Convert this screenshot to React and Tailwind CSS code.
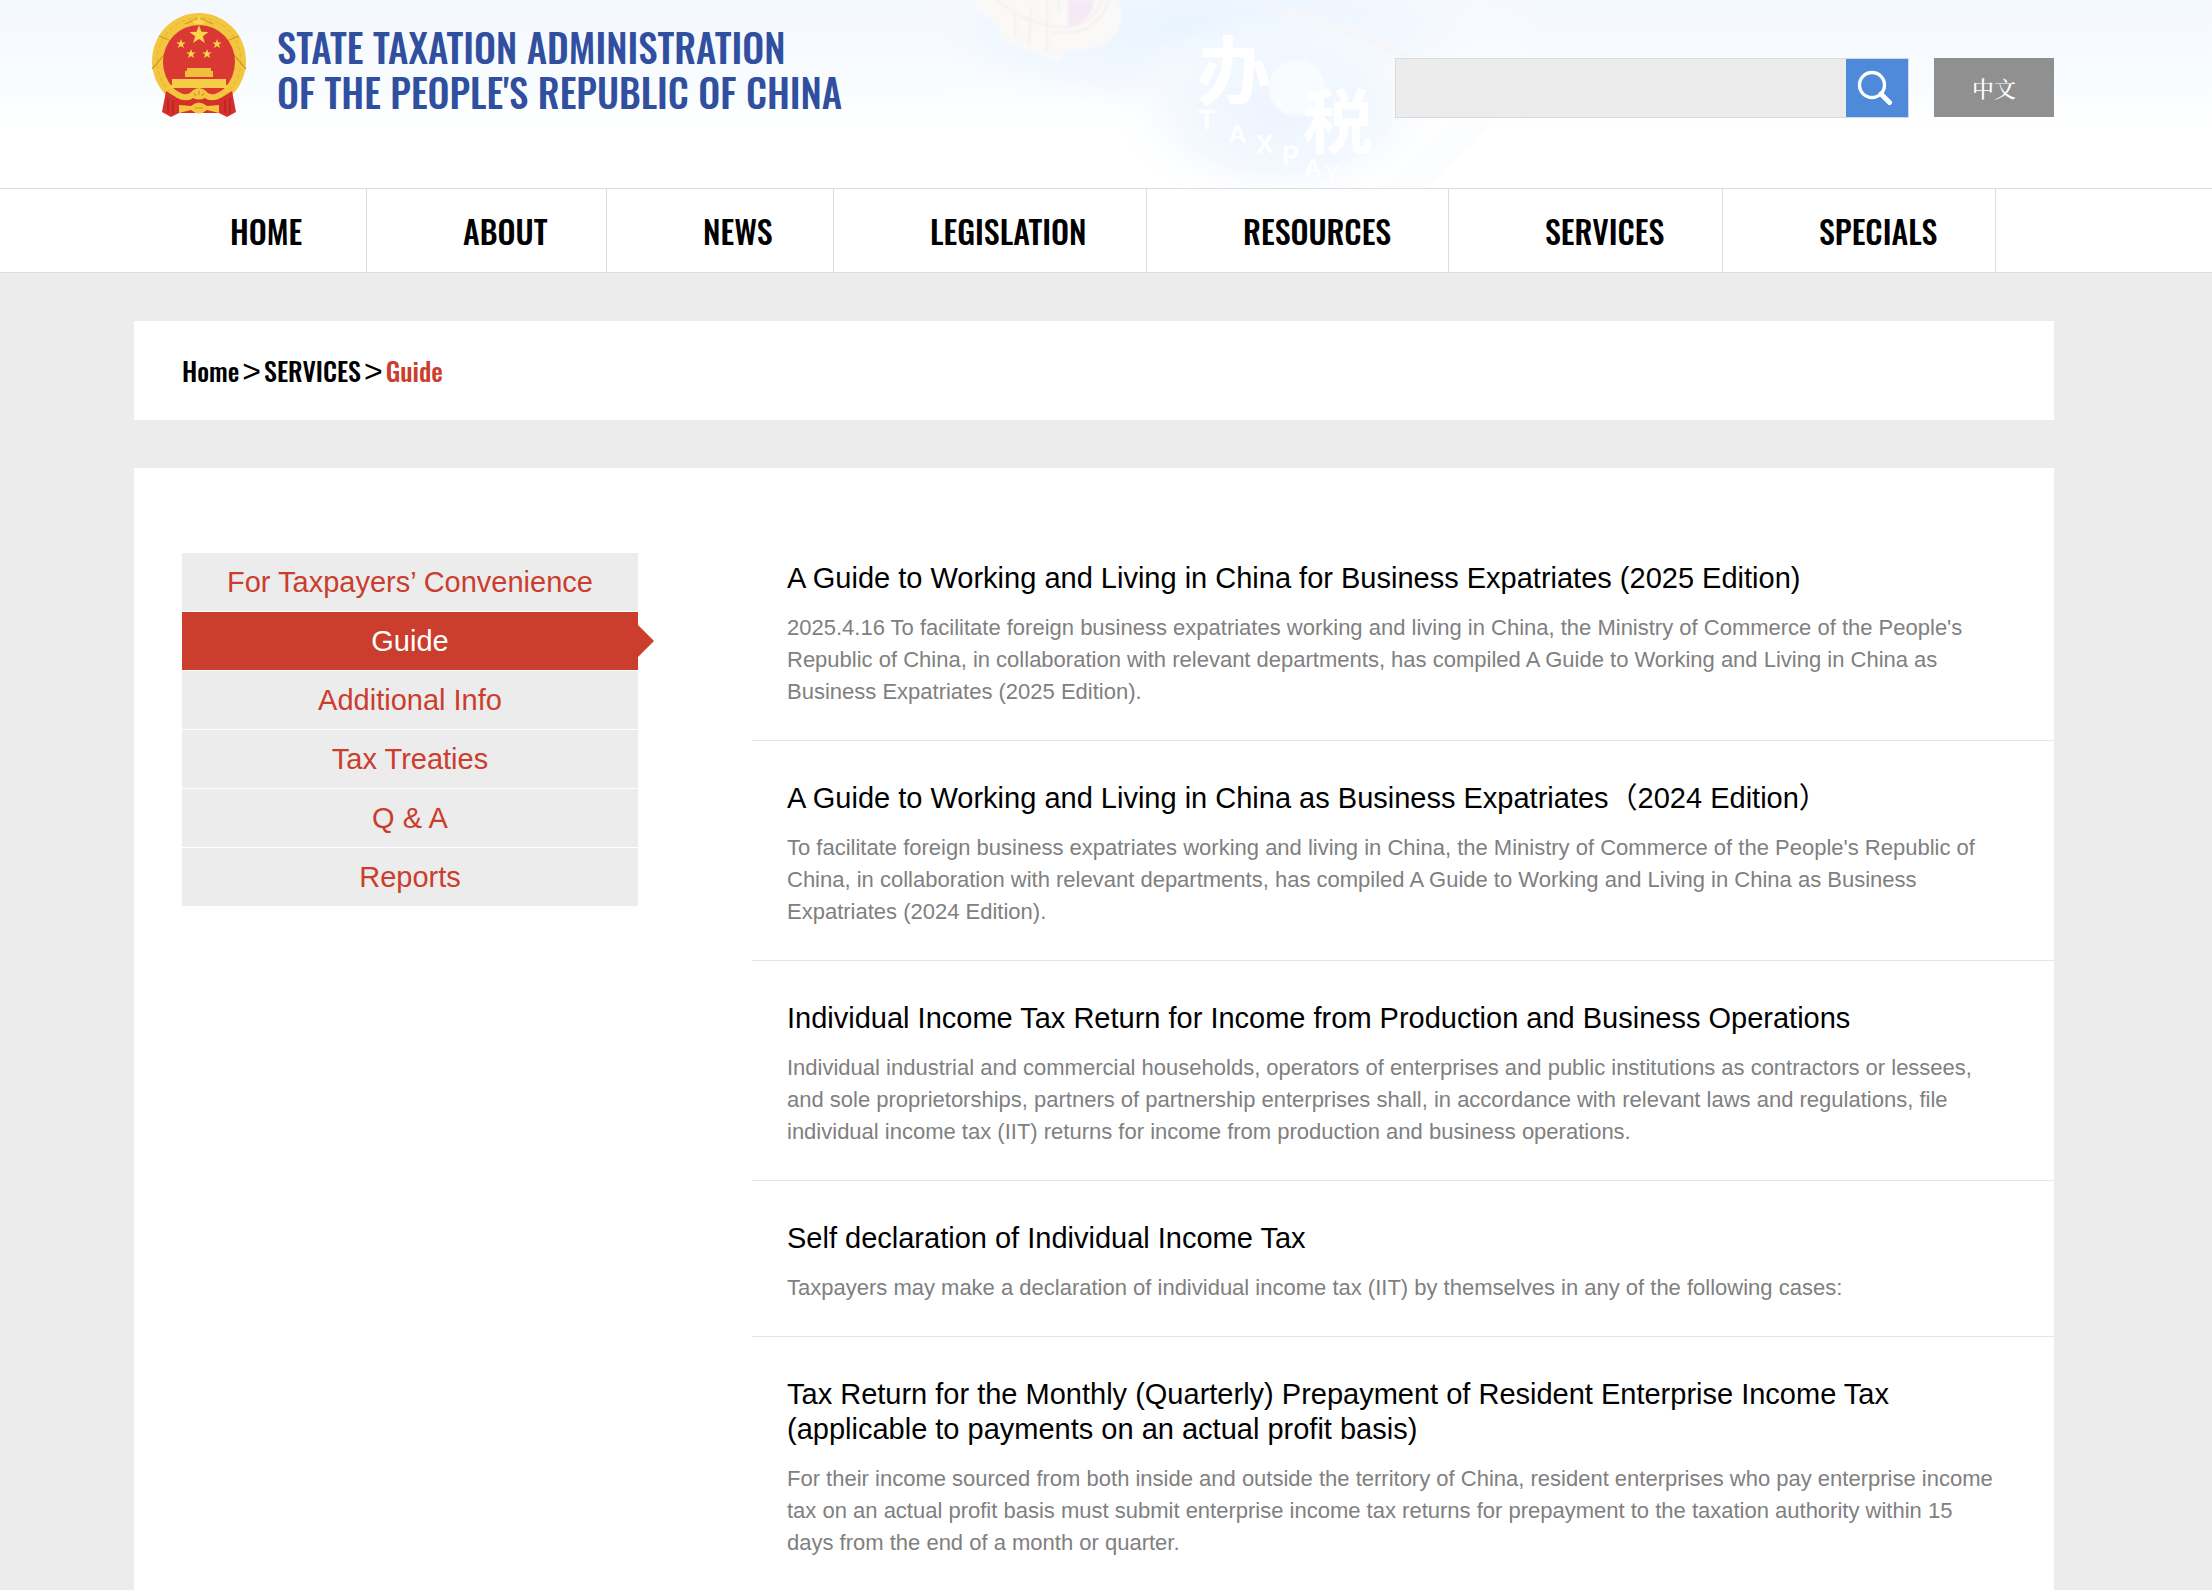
import React, { useState } from "react";

const navItems = [
  { name: "HOME", width: "w-[233px]" },
  { name: "ABOUT", width: "w-[240px]" },
  { name: "NEWS", width: "w-[227px]" },
  { name: "LEGISLATION", width: "w-[313px]" },
  { name: "RESOURCES", width: "w-[302px]" },
  { name: "SERVICES", width: "w-[274px]" },
  { name: "SPECIALS", width: "w-[273px]" },
];

const sideItems = [
  "For Taxpayers’ Convenience",
  "Guide",
  "Additional Info",
  "Tax Treaties",
  "Q & A",
  "Reports",
];

const articles = [
  {
    title: "A Guide to Working and Living in China for Business Expatriates (2025 Edition)",
    text: "2025.4.16 To facilitate foreign business expatriates working and living in China, the Ministry of Commerce of the People's Republic of China, in collaboration with relevant departments, has compiled A Guide to Working and Living in China as Business Expatriates (2025 Edition).",
  },
  {
    title: "A Guide to Working and Living in China as Business Expatriates（2024 Edition）",
    text: "To facilitate foreign business expatriates working and living in China, the Ministry of Commerce of the People's Republic of China, in collaboration with relevant departments, has compiled A Guide to Working and Living in China as Business Expatriates (2024 Edition).",
  },
  {
    title: "Individual Income Tax Return for Income from Production and Business Operations",
    text: "Individual industrial and commercial households, operators of enterprises and public institutions as contractors or lessees, and sole proprietorships, partners of partnership enterprises shall, in accordance with relevant laws and regulations, file individual income tax (IIT) returns for income from production and business operations.",
  },
  {
    title: "Self declaration of Individual Income Tax",
    text: "Taxpayers may make a declaration of individual income tax (IIT) by themselves in any of the following cases:",
  },
  {
    title: "Tax Return for the Monthly (Quarterly) Prepayment of Resident Enterprise Income Tax (applicable to payments on an actual profit basis)",
    text: "For their income sourced from both inside and outside the territory of China, resident enterprises who pay enterprise income tax on an actual profit basis must submit enterprise income tax returns for prepayment to the taxation authority within 15 days from the end of a month or quarter.",
  },
];

const STAR = "0,-10 2.4,-3.2 9.5,-3.1 3.8,1.2 5.9,8.1 0,4 -5.9,8.1 -3.8,1.2 -9.5,-3.1 -2.4,-3.2";

const Emblem = () => (
  <svg viewBox="0 0 96 106" className="w-24 h-[106px] shrink-0" aria-hidden="true">
    {/* Wheat ring */}
    <ellipse cx="48" cy="49" rx="47" ry="48" fill="#f3c63f" />
    <ellipse cx="48" cy="49" rx="42" ry="43" fill="none" stroke="#e3b034" strokeWidth="1" strokeDasharray="4 3" />
    <path d="M1 57 L14 42 M95 57 L82 42 M8 24 L18 28 M88 24 L78 28 M34 12 L48 6 L62 12" stroke="#cf9a28" strokeWidth="1.2" fill="none" />
    <path d="M48 3 L50 8 L55 9 L51 12 H45 L41 9 L46 8 Z" fill="#ffd84f" />
    <ellipse cx="48" cy="50" rx="36" ry="37" fill="#da3832" />
    {/* Stars */}
    <polygon points={STAR} fill="#fbd64a" transform="translate(48 23)" />
    <polygon points={STAR} fill="#fbd64a" transform="translate(30 32) scale(0.5)" />
    <polygon points={STAR} fill="#fbd64a" transform="translate(66 32) scale(0.5)" />
    <polygon points={STAR} fill="#fbd64a" transform="translate(40 42) scale(0.5)" />
    <polygon points={STAR} fill="#fbd64a" transform="translate(56 42) scale(0.5)" />
    {/* Gate */}
    <path d="M36 56 H60 V59 H62 V65 H34 V59 H36 Z" fill="#efbf3c" />
    <path d="M21 67 H75 V73 H77 V76 H19 V73 H21 Z" fill="#f6cd45" />
    {/* Ribbons */}
    <path d="M15 79 L26 86 H70 L81 79 L85 100 L76 105 L68 101 H28 L20 105 L11 100 Z" fill="#d5302b" />
    <path d="M18 75 L32 82 Q38 83 41 79 Q48 73 55 79 Q58 83 64 82 L78 75 L68 87 Q58 90 54 86 Q48 89 42 86 Q38 90 28 87 Z" fill="#f3c63f" />
    <path d="M28 93 L40 94 Q48 87 56 94 L68 93 V101 L56 98 Q48 105 40 98 L28 101 Z" fill="#f3c63f" />
    <path d="M17 86 V101 M22 88 V101 M74 88 V101 M79 86 V101" stroke="#b02423" strokeWidth="1.3" />
    <path d="M43 81 L45 84 M48 79 V83 M53 81 L51 84 M44 96 H52" stroke="#cf9526" strokeWidth="1.2" />
  </svg>
);

// Pale photo of a tax service hall sign behind the header
const HeaderBackdrop = () => (
  <svg
    viewBox="0 0 700 188"
    className="absolute top-0 left-[937px] w-[700px] h-[188px] pointer-events-none"
    aria-hidden="true"
  >
    <defs>
      <radialGradient id="sky" cx="0.37" cy="0.15" r="0.5">
        <stop offset="0" stopColor="#e9f4ff" />
        <stop offset="0.6" stopColor="#f1f7ff" stopOpacity="0.8" />
        <stop offset="1" stopColor="#ffffff" stopOpacity="0" />
      </radialGradient>
      <radialGradient id="wall" cx="0.5" cy="0.5" r="0.5">
        <stop offset="0" stopColor="#edf4ff" />
        <stop offset="0.6" stopColor="#f3f8ff" stopOpacity="0.9" />
        <stop offset="1" stopColor="#fbfdff" stopOpacity="0" />
      </radialGradient>
      <filter id="soft" x="-10%" y="-10%" width="120%" height="120%">
        <feGaussianBlur stdDeviation="1" />
      </filter>
    </defs>
    <rect width="700" height="188" fill="url(#sky)" />
    <ellipse cx="345" cy="110" rx="170" ry="100" fill="url(#wall)" />
    <g filter="url(#soft)">
      <path d="M32 0 L62 26 L64 40 L122 62 L127 50 Q160 52 178 36 Q190 20 180 0 Z" fill="#faf9f8" />
      <path d="M131 0 V26 Q156 22 157 0 Z" fill="#f5e9f6" />
      <path d="M60 0 Q92 27 131 27 Q160 22 164 0 M78 14 V38 M94 6 L92 46 M110 0 V52 M122 0 V14 M115 32 Q160 38 172 0" fill="none" stroke="#f6eceb" strokeWidth="1.5" />
      <path d="M330 6 Q400 22 470 56" fill="none" stroke="#f4f6fa" strokeWidth="8" />
      <circle cx="360" cy="88" r="28" fill="#f9fcff" />
      <path d="M515 120 L440 188 H490 L560 120 Z" fill="#fcfdff" />
    </g>
    <g fill="#ffffff" className="font-['Liberation_Sans','Noto_Sans_CJK_SC',sans-serif] font-bold">
      <text x="260" y="98" fontSize="74">办</text>
      <text x="366" y="148" fontSize="70">税</text>
      <text x="261" y="129" fontSize="28">T</text>
      <text x="291" y="143" fontSize="26">A</text>
      <text x="319" y="153" fontSize="26">X</text>
      <text x="345" y="164" fontSize="26">P</text>
      <text x="367" y="176" fontSize="24">A</text>
      <text x="388" y="181" fontSize="22">Y</text>
    </g>
  </svg>
);

const Header = () => {
  const [query, setQuery] = useState("");

  return (
    <header className="relative h-[188px] bg-gradient-to-b from-[#f4f8ff] via-[#fafdff] to-white to-70% overflow-hidden">
      <HeaderBackdrop />
      <div className="relative pr-6">
        <div className="max-w-[1920px] mx-auto flex items-start justify-between">
          <a href="#" className="flex items-start gap-[30px] pl-[17px] pt-3">
            <Emblem />
            <span className="font-['Oswald','Open_Sans_Condensed',sans-serif] font-medium text-[39px] leading-[45px] text-[#314f9f] pt-3">
              STATE TAXATION ADMINISTRATION
              <br />
              OF THE PEOPLE'S REPUBLIC OF CHINA
            </span>
          </a>
          <div className="flex items-start gap-[25px] pt-[58px]">
            <form
              onSubmit={(e) => e.preventDefault()}
              className="flex h-[60px] w-[514px] bg-[#ececec] border border-[#d9dadc]"
            >
              <input
                type="text"
                aria-label="Search"
                value={query}
                onChange={(e) => setQuery(e.target.value)}
                className="flex-1 min-w-0 px-4 text-[22px] bg-transparent outline-none"
              />
              <button
                type="submit"
                aria-label="Submit search"
                className="w-[62px] pr-1 flex items-center justify-center bg-[#4f89da]"
              >
                <svg viewBox="0 0 36 36" className="w-9 h-9" fill="none" stroke="#fff">
                  <circle cx="15" cy="15" r="12.5" strokeWidth="3.4" />
                  <path d="M24 24 L32.5 32.5" strokeWidth="5" strokeLinecap="round" />
                </svg>
              </button>
            </form>
            <a
              href="#"
              className="w-[120px] h-[59px] flex items-center justify-center bg-[#909090] text-white text-[22px] font-medium font-['Noto_Serif_CJK_SC','Noto_Sans_CJK_SC',serif]"
            >
              中文
            </a>
          </div>
        </div>
      </div>
    </header>
  );
};

const MainNav = () => (
  <nav className="bg-white border-y border-[#dcdcdc] pr-6">
    <ul className="max-w-[1920px] mx-auto flex">
      {navItems.map((item) => (
        <li key={item.name} className={`${item.width} shrink-0 border-r border-[#dcdcdc]`}>
          <a
            href="#"
            className="block pl-24 h-[83px] leading-[83px] text-[32px] font-medium font-['Oswald','Open_Sans_Condensed',sans-serif] text-black"
          >
            {item.name}
          </a>
        </li>
      ))}
    </ul>
  </nav>
);

const Breadcrumb = () => (
  <div className="bg-white px-12 h-[99px] flex items-center gap-[3px] text-[26px] font-medium font-['Oswald','Open_Sans_Condensed',sans-serif] text-black">
    <a href="#">Home</a>
    <span className="font-['Liberation_Sans',sans-serif] font-normal text-[32px]">&gt;</span>
    <a href="#">SERVICES</a>
    <span className="font-['Liberation_Sans',sans-serif] font-normal text-[32px]">&gt;</span>
    <a href="#" className="text-[#cb3d2c]">
      Guide
    </a>
  </div>
);

const SideMenu = () => (
  <ul className="w-[456px] shrink-0 mt-8 flex flex-col gap-px">
    {sideItems.map((name) => {
      const isActive = name === "Guide";
      return (
        <li key={name} className="relative">
          <a
            href="#"
            className={`block h-[58px] leading-[58px] text-center text-[29px] ${
              isActive ? "bg-[#cb3d2c] text-white" : "bg-[#ececec] text-[#cb3d2c]"
            }`}
          >
            {name}
          </a>
          {isActive && (
            <div className="absolute left-full top-[13px] border-y-16 border-y-transparent border-l-16 border-l-[#cb3d2c]" />
          )}
        </li>
      );
    })}
  </ul>
);

const App = () => {
  return (
    <div className="min-h-screen bg-[#ececec] font-['Liberation_Sans','Noto_Sans_CJK_SC',sans-serif]">
      <Header />
      <MainNav />
      <div className="pr-6">
        <div className="max-w-[1920px] mx-auto pt-12 flex flex-col gap-12">
          <Breadcrumb />
          <main className="bg-white pt-[53px] pl-12 pb-12 flex items-start gap-[114px]">
            <SideMenu />
            <div className="flex-1 min-w-0">
              {articles.map((article) => (
                <article
                  key={article.title}
                  className="pl-[35px] pr-14 pt-10 pb-8 border-b border-[#e5e5e5]"
                >
                  <h2 className="text-[29px] leading-[35px] text-black">
                    <a href="#">{article.title}</a>
                  </h2>
                  <p className="mt-4 text-[22px] leading-8 text-[#808080]">{article.text}</p>
                </article>
              ))}
            </div>
          </main>
        </div>
      </div>
    </div>
  );
};

export default App;
